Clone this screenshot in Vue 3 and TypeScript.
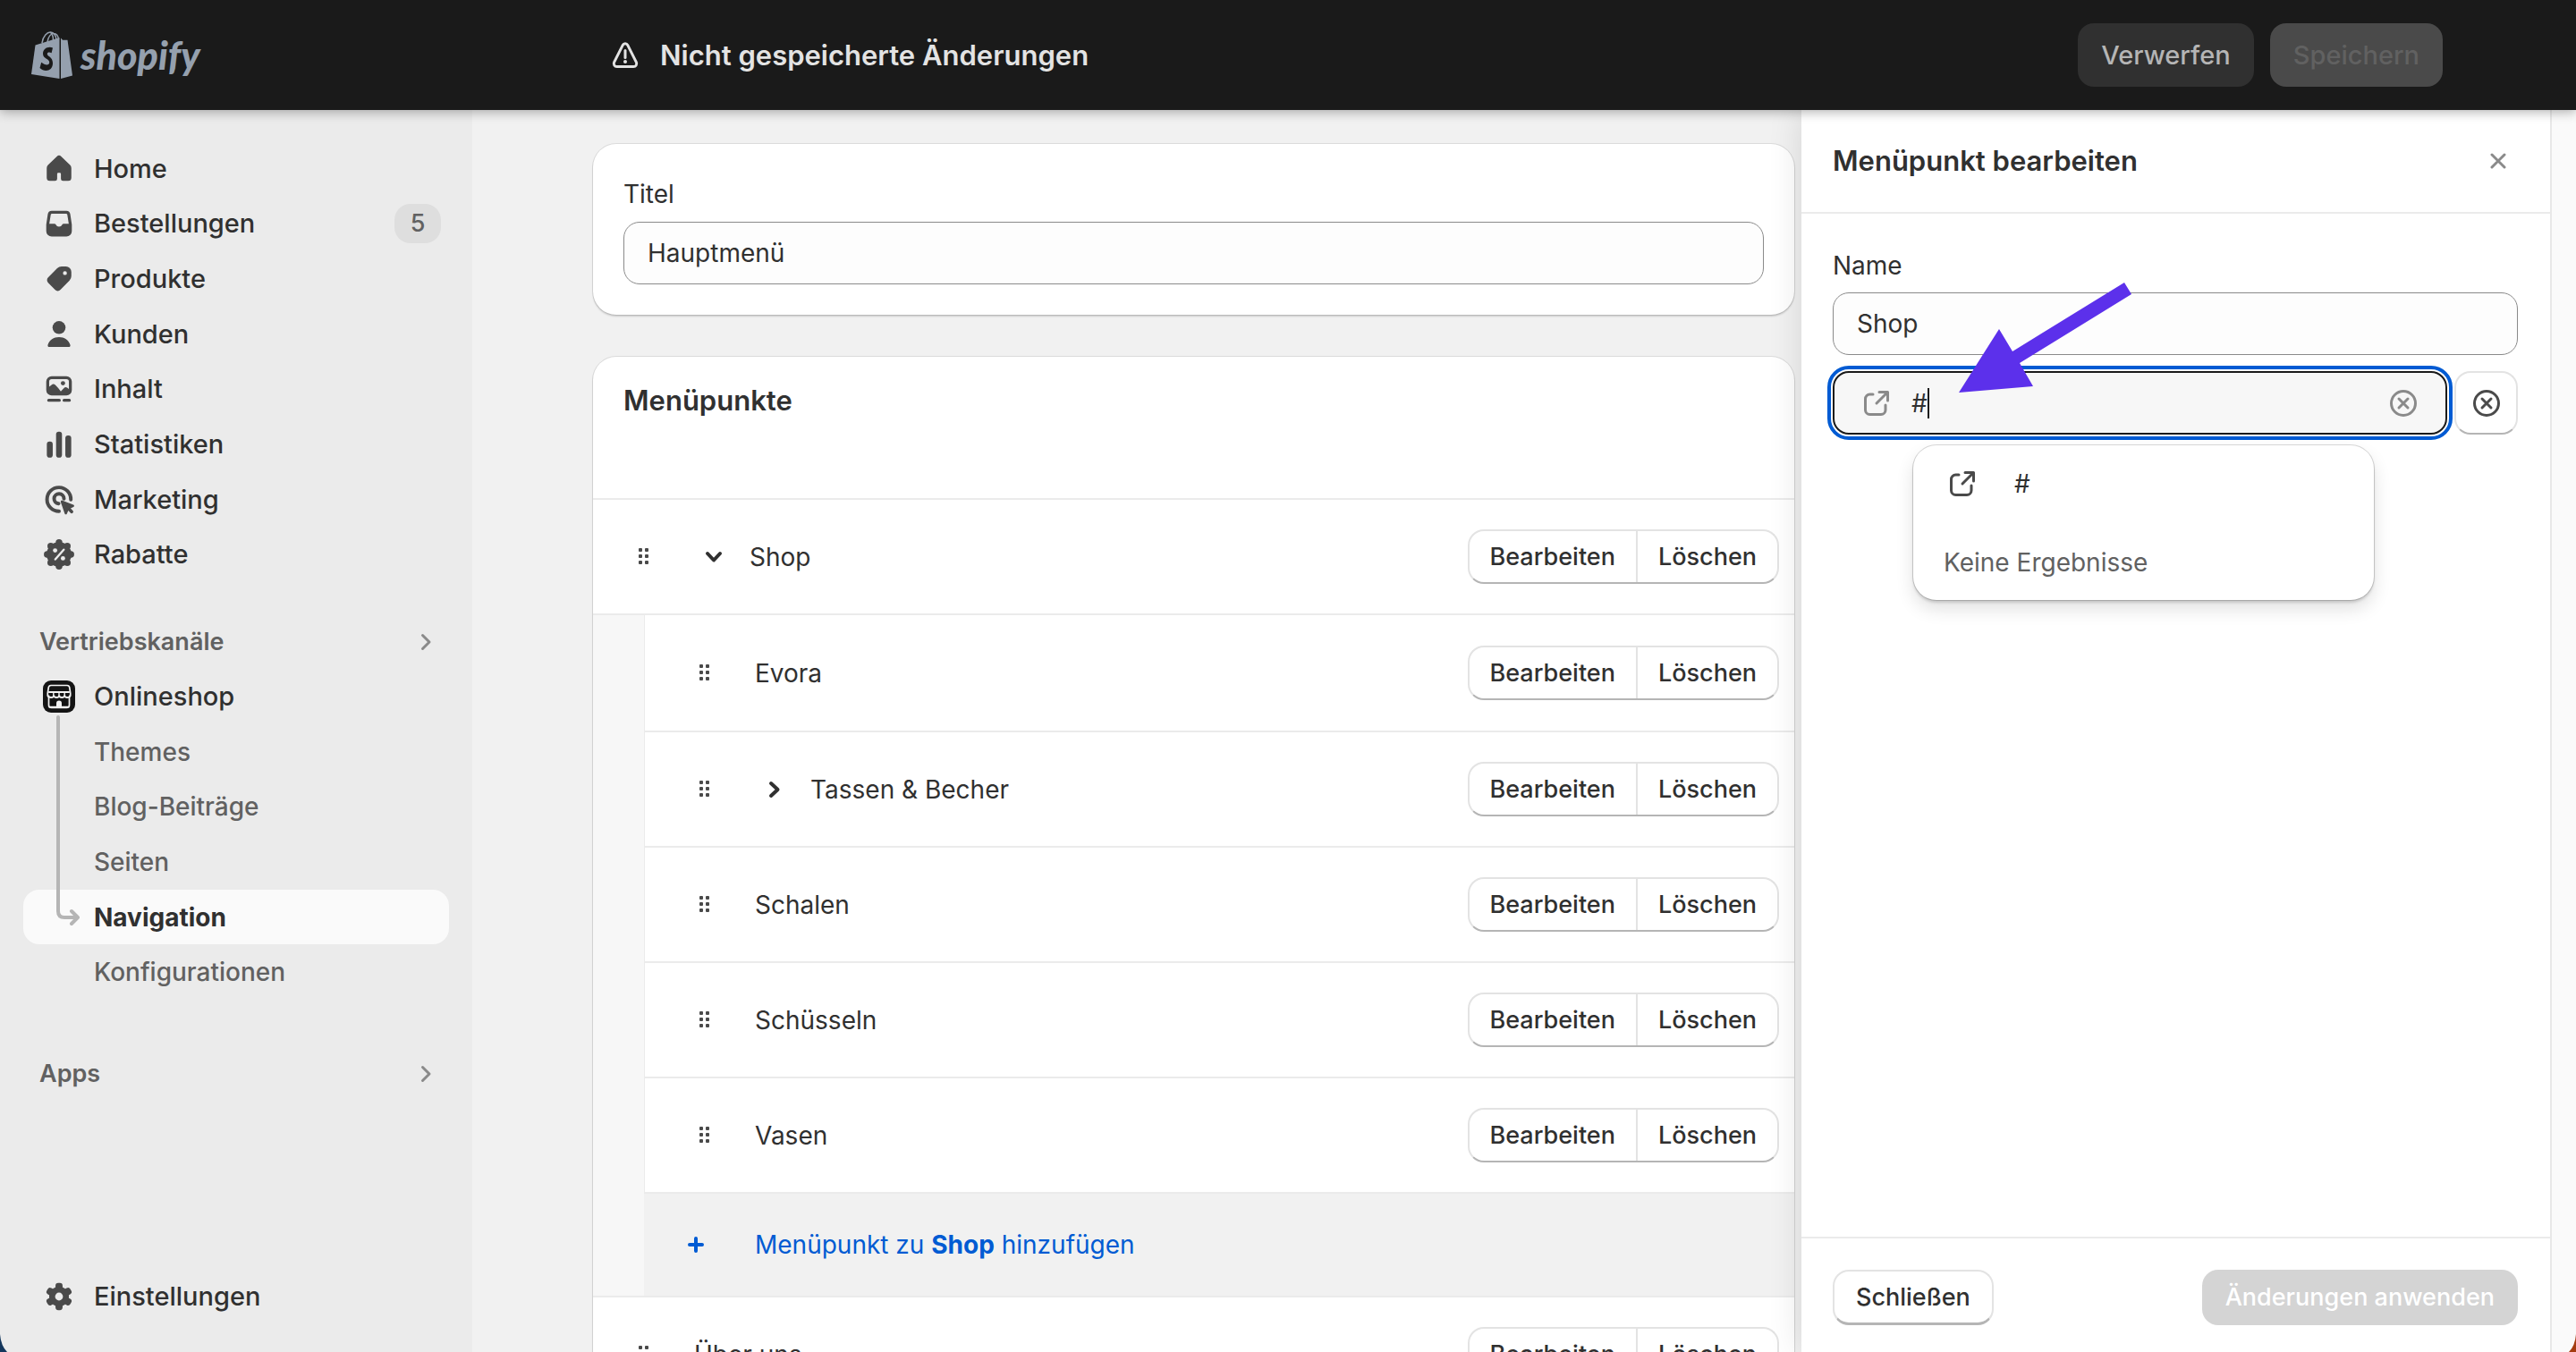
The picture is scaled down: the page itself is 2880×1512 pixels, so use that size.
<script setup lang="ts">
import { ref } from 'vue'

interface NavItem {
  label: string
  icon: string
  badge?: string
}

interface MenuEntry {
  label: string
  expandable?: boolean
}

const icons: Record<string, string> = {
  home: '<path d="M8.9 3.6a1.6 1.6 0 0 1 2.2 0l4.5 4.4a2.2 2.2 0 0 1 .65 1.55v4.9a1.6 1.6 0 0 1-1.6 1.6h-2.6a1.1 1.1 0 0 1-1.1-1.1v-2.4a.6.6 0 0 0-.6-.6h-.7a.6.6 0 0 0-.6.6v2.4a1.1 1.1 0 0 1-1.1 1.1h-2.6a1.6 1.6 0 0 1-1.6-1.6v-4.9a2.2 2.2 0 0 1 .65-1.55z"/>',
  orders:
    '<path fill-rule="evenodd" d="M6.3 3.5h7.4a2 2 0 0 1 2 1.75l.7 4.6q.1.5.1 1v3a2.75 2.75 0 0 1-2.75 2.75h-7.5a2.75 2.75 0 0 1-2.75-2.75v-3q0-.5.1-1l.7-4.6a2 2 0 0 1 2-1.75zM6.4 5a.6.6 0 0 0-.6.5l-.75 4.6h2.6a.8.8 0 0 1 .75.5 1.75 1.75 0 0 0 3.2 0 .8.8 0 0 1 .75-.5h2.6l-.75-4.6a.6.6 0 0 0-.6-.5z"/>',
  products:
    '<path fill-rule="evenodd" d="M11.4 3.6h2.1a2.75 2.75 0 0 1 2.75 2.75v2.2a3.2 3.2 0 0 1-.93 2.25l-4.6 4.7a1.9 1.9 0 0 1-2.75 0l-3.5-3.6a1.9 1.9 0 0 1 0-2.7l4.6-4.65a3.2 3.2 0 0 1 2.33-.95zM13 6a1 1 0 1 0 0 2 1 1 0 0 0 0-2z"/>',
  customers:
    '<circle cx="10" cy="6.5" r="3.3"/><path d="M4.3 15.3c.8-2.4 3-3.9 5.7-3.9s4.9 1.5 5.7 3.9c.15.6-.2 1.1-.75 1.1H5.05c-.55 0-.9-.5-.75-1.1z"/>',
  content:
    '<path fill-rule="evenodd" d="M6.25 3.5h7.5a2.75 2.75 0 0 1 2.75 2.75v4.3a2.75 2.75 0 0 1-2.75 2.75h-7.5a2.75 2.75 0 0 1-2.75-2.75v-4.3a2.75 2.75 0 0 1 2.75-2.75zM6.25 5A1.25 1.25 0 0 0 5 6.25V8.9l1.2-1a1.4 1.4 0 0 1 1.9.1l1.5 1.6 1.3 1.6 1.6-1.7a1.3 1.3 0 0 1 1.6-.15l.9.6V6.25A1.25 1.25 0 0 0 13.75 5z"/><circle cx="12" cy="7.1" r="1.1"/><rect x="4" y="15" width="6.9" height="1.5" rx=".75"/><rect x="11.8" y="15" width="4.2" height="1.5" rx=".75"/>',
  analytics:
    '<rect x="3.8" y="8.5" width="3" height="8.2" rx="1.4"/><rect x="8.5" y="3.5" width="3" height="13.2" rx="1.4"/><rect x="13.2" y="5.4" width="3" height="11.3" rx="1.4"/>',
  marketing:
    '<g fill="none" stroke="currentColor" stroke-width="1.8" stroke-linecap="round"><path d="M16 9.9a6.05 6.05 0 1 0-6 5.9"/><path d="M12.5 9.4a2.5 2.5 0 1 0-2.7 2.5"/></g><path d="M11.7 10.3l5.6 2.2c.6.2.5.9 0 1.1l-1.4.7 1.1 1.1a.8.8 0 0 1-1.2 1.2l-1.1-1.1-.7 1.5c-.2.6-.9.5-1.1 0l-2-5.8c-.2-.6.3-1.1.8-.9z"/>',
  discounts:
    '<circle cx="10" cy="10" r="6.3"/><circle cx="10" cy="4" r="1.7"/><circle cx="10" cy="16" r="1.7"/><circle cx="4" cy="10" r="1.7"/><circle cx="16" cy="10" r="1.7"/><circle cx="5.8" cy="5.8" r="1.7"/><circle cx="14.2" cy="5.8" r="1.7"/><circle cx="5.8" cy="14.2" r="1.7"/><circle cx="14.2" cy="14.2" r="1.7"/><g fill="#ebebeb"><circle cx="8" cy="8" r="1.1"/><circle cx="12" cy="12" r="1.1"/></g><path d="M8.1 12.5l4.3-4.9" stroke="#ebebeb" stroke-width="1.1" stroke-linecap="round"/>',
  settings:
    '<g><rect x="8.2" y="3.1" width="3.6" height="13.8" rx="1.4"/><rect x="8.2" y="3.1" width="3.6" height="13.8" rx="1.4" transform="rotate(60 10 10)"/><rect x="8.2" y="3.1" width="3.6" height="13.8" rx="1.4" transform="rotate(120 10 10)"/><circle cx="10" cy="10" r="5"/></g><circle cx="10" cy="10" r="2" fill="#ebebeb"/>',
}

const navItems: NavItem[] = [
  { label: 'Home', icon: 'home' },
  { label: 'Bestellungen', icon: 'orders', badge: '5' },
  { label: 'Produkte', icon: 'products' },
  { label: 'Kunden', icon: 'customers' },
  { label: 'Inhalt', icon: 'content' },
  { label: 'Statistiken', icon: 'analytics' },
  { label: 'Marketing', icon: 'marketing' },
  { label: 'Rabatte', icon: 'discounts' },
]

const shopPages: string[] = ['Themes', 'Blog-Beiträge', 'Seiten', 'Navigation', 'Konfigurationen']
const activePage = ref('Navigation')

const children: MenuEntry[] = [
  { label: 'Evora' },
  { label: 'Tassen & Becher', expandable: true },
  { label: 'Schalen' },
  { label: 'Schüsseln' },
  { label: 'Vasen' },
]

const menuTitle = ref('Hauptmenü')
const itemName = ref('Shop')
const itemLink = ref('#')
</script>

<template>
  <div class="app">
    <header class="topbar">
      <a class="brand" href="#" aria-label="shopify">
        <svg class="bag" viewBox="0 0 46 54" aria-hidden="true">
          <path d="M4.5 15.5L31.5 7v46L0 48z" fill="#95a0ae" />
          <path d="M33 7.5l2 2.2h5.5L46 49.5 33 53z" fill="#95a0ae" />
          <path d="M12 13C13 5 18 .8 21.5 1c4 .2 6 4 6.5 9M18 12c1-6 4-9.5 7-9.5 3.5 0 5 3 5.5 6.5M24.5 10c0-4-1-7-3-8.5" fill="none" stroke="#95a0ae" stroke-width="1.5" />
          <path d="M24 18.5c-5-2.2-11 .8-11 6.5 0 6 7.2 5.5 7.2 9.7 0 3.8-5 3.3-9 .1l-1.7 6.2c5 5 14.5 4 14.5-5.5 0-7-6.2-7.5-6.2-10 0-2.2 2.5-2.3 4.8-1.3z" fill="#1a1a1a" />
        </svg>
        <span class="wordmark">shopify</span>
      </a>
      <div class="savebar">
        <svg class="warn" viewBox="0 0 30 30" aria-hidden="true">
          <path d="M12.3 3.4L2.6 22.6a3.5 3.5 0 0 0 3.1 5h18.6a3.5 3.5 0 0 0 3.1-5L17.7 3.4a3 3 0 0 0-5.4 0z" fill="none" stroke="currentColor" stroke-width="3" />
          <path d="M15 9.5v8" stroke="currentColor" stroke-width="3" stroke-linecap="round" />
          <circle cx="15" cy="22" r="2" fill="currentColor" />
        </svg>
        <h1>Nicht gespeicherte Änderungen</h1>
        <button class="bar-btn" type="button">Verwerfen</button>
        <button class="bar-btn save" type="button" disabled>Speichern</button>
      </div>
    </header>

    <div class="body">
      <aside class="sidebar">
        <nav class="nav primary">
          <a v-for="item in navItems" :key="item.label" class="nav-item" href="#">
            <svg class="nav-icon" viewBox="0 0 20 20" fill="currentColor" aria-hidden="true" v-html="icons[item.icon]"></svg>
            <span>{{ item.label }}</span>
            <span v-if="item.badge" class="badge">{{ item.badge }}</span>
          </a>
        </nav>
        <nav class="nav channels">
          <a class="nav-item section" href="#">
            <span>Vertriebskanäle</span>
            <svg class="section-chevron" viewBox="0 0 20 20" aria-hidden="true"><path d="M6.5 2.5L14 10l-7.5 7.5" /></svg>
          </a>
          <a class="nav-item" href="#">
            <svg class="nav-icon" viewBox="0 0 44 44" aria-hidden="true">
              <rect x="4" y="4" width="36" height="36" rx="9" fill="#141414" />
              <path d="M13 9.5h18q2.3 0 2.7 2.2l1 6.3v3l-1.2 2v8.5q0 3-3 3h-17q-3 0-3-3V23l-1.2-2v-3l1-6.3q.4-2.2 2.7-2.2z" fill="none" stroke="#f4f4f4" stroke-width="1.7" />
              <path d="M10.2 17h23.6M10.2 20.5q0 2.5 3 2.5t3-2.5q0 2.5 3 2.5t3-2.5q0 2.5 3 2.5t3-2.5q0 2.5 3 2.5t2.6-2.5" fill="none" stroke="#f4f4f4" stroke-width="1.8" />
              <path d="M15.8 17v4M22 17v4M28.2 17v4" stroke="#f4f4f4" stroke-width="1.4" />
              <path d="M19 34.5v-5q0-3 3-3t3 3v5z" fill="#f4f4f4" />
              <path d="M12 33.5h20" stroke="#f4f4f4" stroke-width="1.5" />
            </svg>
            <span>Onlineshop</span>
          </a>
          <a
            v-for="page in shopPages"
            :key="page"
            class="nav-item sub"
            :class="{ active: page === activePage }"
            href="#"
            @click.prevent="activePage = page"
          >
            <span>{{ page }}</span>
          </a>
          <svg class="branch" viewBox="0 0 28 236" aria-hidden="true">
            <path d="M3 2v217q0 7 7 7h14M18 219l7 7-7 7" />
          </svg>
        </nav>
        <nav class="nav apps">
          <a class="nav-item section" href="#">
            <span>Apps</span>
            <svg class="section-chevron" viewBox="0 0 20 20" aria-hidden="true"><path d="M6.5 2.5L14 10l-7.5 7.5" /></svg>
          </a>
        </nav>
        <nav class="nav settings">
          <a class="nav-item" href="#">
            <svg class="nav-icon" viewBox="0 0 20 20" fill="currentColor" aria-hidden="true" v-html="icons.settings"></svg>
            <span>Einstellungen</span>
          </a>
        </nav>
      </aside>

      <main class="main">
        <section class="card title-card">
          <label class="label" for="menu-title">Titel</label>
          <input id="menu-title" v-model="menuTitle" class="input" type="text" />
        </section>

        <section class="card list-card">
          <h2>Menüpunkte</h2>
          <div class="row">
            <svg class="handle" viewBox="0 0 12 20" aria-hidden="true">
              <g fill="currentColor">
                <rect v-for="n in 6" :key="n" :x="n % 2 ? 0 : 7" :y="Math.floor((n - 1) / 2) * 7" width="4" height="4" rx="1" />
              </g>
            </svg>
            <svg class="toggle" viewBox="0 0 22 22" aria-hidden="true"><path d="M4 7l7 7.5L18 7" /></svg>
            <span class="row-label">Shop</span>
            <div class="actions">
              <button type="button">Bearbeiten</button>
              <button type="button">Löschen</button>
            </div>
          </div>
          <div class="nested">
            <div class="nested-rows">
              <div v-for="child in children" :key="child.label" class="row child">
                <svg class="handle" viewBox="0 0 12 20" aria-hidden="true">
                  <g fill="currentColor">
                    <rect v-for="n in 6" :key="n" :x="n % 2 ? 0 : 7" :y="Math.floor((n - 1) / 2) * 7" width="4" height="4" rx="1" />
                  </g>
                </svg>
                <svg v-if="child.expandable" class="toggle" viewBox="0 0 22 22" aria-hidden="true"><path d="M7 4l7.5 7L7 18" /></svg>
                <span class="row-label">{{ child.label }}</span>
                <div class="actions">
                  <button type="button">Bearbeiten</button>
                  <button type="button">Löschen</button>
                </div>
              </div>
            </div>
            <a class="add" href="#">
              <svg class="plus" viewBox="0 0 18 18" aria-hidden="true"><path d="M9 2v14M2 9h14" /></svg>
              <span>Menüpunkt zu <b>Shop</b> hinzufügen</span>
            </a>
          </div>
          <div class="row">
            <svg class="handle" viewBox="0 0 12 20" aria-hidden="true">
              <g fill="currentColor">
                <rect v-for="n in 6" :key="n" :x="n % 2 ? 0 : 7" :y="Math.floor((n - 1) / 2) * 7" width="4" height="4" rx="1" />
              </g>
            </svg>
            <span class="row-label last">Über uns</span>
            <div class="actions">
              <button type="button">Bearbeiten</button>
              <button type="button">Löschen</button>
            </div>
          </div>
        </section>
      </main>

      <section class="panel" aria-label="Menüpunkt bearbeiten">
        <header class="panel-head">
          <h2>Menüpunkt bearbeiten</h2>
          <button class="close" type="button" aria-label="Schließen">
            <svg viewBox="0 0 22 22" aria-hidden="true"><path d="M4 4l14 14M18 4L4 18" /></svg>
          </button>
        </header>
        <div class="panel-body">
          <label class="label" for="item-name">Name</label>
          <input id="item-name" v-model="itemName" class="input" type="text" />
          <div class="link-row">
            <div class="link-field">
              <svg class="ext muted" viewBox="0 0 30 30" aria-hidden="true">
                <path d="M11 5H7.5A5 5 0 0 0 2.5 10v12.5a5 5 0 0 0 5 5H20a5 5 0 0 0 5-5V17M18 2.5h9.5V12M27 3L15 15" />
              </svg>
              <input v-model="itemLink" class="link-input" type="text" aria-label="Link" />
              <span class="caret" aria-hidden="true"></span>
              <button class="clear" type="button" aria-label="Leeren">
                <svg viewBox="0 0 32 32" aria-hidden="true"><circle cx="16" cy="16" r="13.5" /><path d="M11 11l10 10M21 11L11 21" /></svg>
              </button>
            </div>
            <button class="remove" type="button" aria-label="Link entfernen">
              <svg viewBox="0 0 32 32" aria-hidden="true"><circle cx="16" cy="16" r="13.5" /><path d="M11 11l10 10M21 11L11 21" /></svg>
            </button>
            <div class="popover">
              <a class="option" href="#">
                <svg class="ext" viewBox="0 0 30 30" aria-hidden="true">
                  <path d="M11 5H7.5A5 5 0 0 0 2.5 10v12.5a5 5 0 0 0 5 5H20a5 5 0 0 0 5-5V17M18 2.5h9.5V12M27 3L15 15" />
                </svg>
                <span>#</span>
              </a>
              <p>Keine Ergebnisse</p>
            </div>
            <svg class="pointer" viewBox="0 0 194 124" aria-hidden="true">
              <path d="M0 123L45 52l15 25L185 0l8 13L68 90l15 26z" />
            </svg>
          </div>
        </div>
        <footer class="panel-foot">
          <button class="btn" type="button">Schließen</button>
          <button class="btn apply" type="button" disabled>Änderungen anwenden</button>
        </footer>
      </section>
      <div class="gutter"></div>
    </div>
    <svg class="corner left" viewBox="0 0 8 20" aria-hidden="true"><path d="M0 0q1 13 8 20H0z" fill="#14365c" /></svg>
    <svg class="corner right" viewBox="0 0 8 20" aria-hidden="true"><path d="M8 0Q7 13 0 20h8z" fill="#a43c10" /></svg>
  </div>
</template>

<style>
html,
body {
  background: #f1f1f1;
}
</style>

<style scoped>
.app,
.app * {
  box-sizing: border-box;
}
.app {
  position: relative;
  display: flex;
  flex-direction: column;
  height: 100vh;
  overflow: hidden;
  font-family: Inter, 'Liberation Sans', sans-serif;
  font-size: 28px;
  line-height: 44px;
  color: #303030;
}
button,
input {
  font: inherit;
  color: inherit;
  margin: 0;
}
button {
  border: 0;
  background: none;
}
a {
  color: inherit;
  text-decoration: none;
}
h1,
h2,
p {
  margin: 0;
}
h1,
h2 {
  font-size: 31px;
  font-weight: 600;
}

/* Top bar */
.topbar {
  position: relative;
  z-index: 3;
  flex: 0 0 123px;
  display: flex;
  align-items: center;
  background: #1a1a1a;
  box-shadow: 0 2px 12px rgba(0, 0, 0, 0.32);
}
.brand {
  flex: 0 0 684px;
  display: flex;
  align-items: center;
  gap: 9px;
  padding-left: 35px;
  color: #95a0ae;
}
.bag {
  width: 46px;
  height: 54px;
}
.wordmark {
  font-family: Lato, 'Open Sans', sans-serif;
  font-size: 43px;
  font-weight: 900;
  font-style: italic;
}
.savebar {
  flex: 1;
  display: flex;
  align-items: center;
  gap: 18px;
  padding-right: 149px;
  color: #e3e3e3;
}
.warn {
  width: 30px;
  height: 30px;
}
.savebar h1 {
  flex: 1;
  padding-left: 6px;
}
.bar-btn {
  height: 71px;
  padding: 0 26px;
  border-radius: 18px;
  background: #303030;
  color: #b5b5b5;
  font-size: 29px;
  font-weight: 500;
}
.bar-btn.save {
  background: #4a4a4a;
  color: #616161;
  font-weight: 550;
}

/* Sidebar */
.body {
  flex: 1;
  min-height: 0;
  display: flex;
}
.sidebar {
  flex: 0 0 528px;
  display: flex;
  flex-direction: column;
  padding: 35px 26px 31px;
  background: #ebebeb;
}
.nav {
  position: relative;
  display: grid;
  grid-auto-rows: 1fr;
}
.primary {
  min-height: 493px;
}
.channels {
  min-height: 431px;
  margin-top: 36px;
}
.apps {
  min-height: 62px;
  margin-top: 52px;
}
.settings {
  min-height: 62px;
  margin-top: auto;
}
.nav-item {
  display: flex;
  align-items: center;
  gap: 17px;
  padding: 0 9px 0 18px;
  border-radius: 18px;
  font-size: 29px;
  font-weight: 550;
}
.nav-icon {
  flex: none;
  width: 44px;
  height: 44px;
  color: #4a4a4a;
}
.badge {
  width: 52px;
  margin-left: auto;
  border-radius: 18px;
  background: #dedede;
  color: #616161;
  font-size: 27px;
  text-align: center;
}
.section {
  justify-content: space-between;
  padding-right: 16px;
  color: #616161;
  font-size: 27px;
  font-weight: 600;
}
.section-chevron {
  width: 20px;
  height: 20px;
  fill: none;
  stroke: #8a8a8a;
  stroke-width: 3;
  stroke-linecap: round;
  stroke-linejoin: round;
}
.sub {
  padding-left: 79px;
  color: #616161;
  font-size: 28px;
  font-weight: 450;
}
.sub.active {
  background: #fafafa;
  color: #303030;
  font-weight: 650;
}
.branch {
  position: absolute;
  left: 36px;
  top: 113px;
  width: 28px;
  height: 236px;
  fill: none;
  stroke: #b5b5b5;
  stroke-width: 4;
  stroke-linecap: round;
  stroke-linejoin: round;
}

/* Main column */
.main {
  flex: 1;
  min-width: 0;
  display: flex;
  flex-direction: column;
  gap: 47px;
  padding: 38px 8px 0 135px;
}
.card {
  flex: none;
  border-radius: 26px;
  background: #fff;
  box-shadow:
    0 0 0 1px rgba(0, 0, 0, 0.09),
    0 2px 2px rgba(0, 0, 0, 0.16);
}
.title-card {
  display: flex;
  flex-direction: column;
  gap: 9px;
  padding: 34px;
}
.input {
  width: 100%;
  height: 70px;
  padding: 0 26px;
  border: 1px solid #8a8a8a;
  border-radius: 18px;
  background: #fdfdfd;
}
.list-card h2 {
  height: 158px;
  padding: 27px 34px;
}
.row {
  min-height: 129px;
  display: flex;
  align-items: center;
  padding: 0 17px 0 51px;
  border-top: 2px solid #ebebeb;
}
.handle {
  flex: none;
  width: 12px;
  height: 20px;
  color: #4a4a4a;
}
.toggle {
  flex: none;
  width: 22px;
  height: 22px;
  margin: 0 29px 0 61px;
  fill: none;
  stroke: #303030;
  stroke-width: 4;
  stroke-linecap: round;
  stroke-linejoin: round;
}
.row-label {
  flex: 1;
}
.row-label.last {
  padding-left: 50px;
}
.actions {
  display: flex;
  height: 61px;
  border: 2px solid #e3e3e3;
  border-bottom-color: #b5b5b5;
  border-radius: 18px;
}
.actions button {
  padding: 0 23px;
  font-size: 27px;
  font-weight: 500;
}
.actions button + button {
  border-left: 2px solid #e3e3e3;
}
.nested {
  padding-left: 57px;
  border-top: 2px solid #ebebeb;
  background: linear-gradient(90deg, #f7f7f7 57px, #fff 57px);
}
.nested-rows {
  display: grid;
  grid-auto-rows: 1fr;
  min-height: 645px;
  border-left: 1px solid #ebebeb;
}
.child {
  padding-left: 61px;
}
.child:first-child {
  border-top: 0;
}
.child .handle + .row-label {
  padding-left: 50px;
}
.add {
  display: flex;
  align-items: center;
  gap: 57px;
  min-height: 116px;
  padding-left: 49px;
  border-top: 2px solid #ebebeb;
  background: #f1f1f1;
  color: #005bd3;
}
.add b {
  font-weight: 700;
}
.plus {
  width: 18px;
  height: 18px;
  stroke: #005bd3;
  stroke-width: 4;
  stroke-linecap: round;
}

/* Edit panel */
.panel {
  position: relative;
  z-index: 2;
  flex: 0 0 837px;
  display: flex;
  flex-direction: column;
  background: #fff;
  box-shadow: 0 0 36px rgba(0, 0, 0, 0.12);
}
.panel-head {
  display: flex;
  align-items: center;
  justify-content: space-between;
  height: 116px;
  padding: 0 47px 0 35px;
  border-bottom: 2px solid #ebebeb;
}
.close {
  padding: 0;
  line-height: 0;
}
.close svg {
  width: 22px;
  height: 22px;
  stroke: #8a8a8a;
  stroke-width: 3;
  stroke-linecap: round;
}
.panel-body {
  flex: 1;
  display: flex;
  flex-direction: column;
  padding: 36px 36px 0 35px;
}
.panel-body .label {
  margin-bottom: 8px;
}
.link-row {
  position: relative;
  display: flex;
  gap: 8px;
  margin-top: 18px;
}
.link-field {
  flex: 1;
  display: flex;
  align-items: center;
  height: 71px;
  padding: 0 31px 0 32px;
  border: 2px solid #1a1a1a;
  border-radius: 18px;
  outline: 4px solid #005bd3;
  outline-offset: 2px;
  background: #f7f7f7;
}
.ext {
  flex: none;
  width: 30px;
  height: 30px;
  fill: none;
  stroke: #4a4a4a;
  stroke-width: 3;
  stroke-linecap: round;
  stroke-linejoin: round;
}
.ext.muted {
  stroke: #8a8a8a;
}
.link-input {
  width: 18px;
  margin-left: 24px;
  padding: 0;
  border: 0;
  outline: 0;
  background: none;
}
.caret {
  width: 2px;
  height: 34px;
  background: #1a1a1a;
}
.clear {
  margin-left: auto;
  padding: 0;
  line-height: 0;
}
.clear svg,
.remove svg {
  width: 32px;
  height: 32px;
  fill: none;
  stroke: #8a8a8a;
  stroke-width: 3;
  stroke-linecap: round;
}
.remove {
  width: 71px;
  height: 71px;
  padding: 0;
  line-height: 0;
  border: 2px solid #e3e3e3;
  border-bottom-color: #b5b5b5;
  border-radius: 18px;
}
.remove svg {
  stroke: #4a4a4a;
}
.popover {
  position: absolute;
  left: 90px;
  top: 83px;
  width: 515px;
  padding: 21px 34px 20px;
  border-radius: 26px;
  background: #fff;
  box-shadow:
    0 0 0 1px rgba(0, 0, 0, 0.15),
    0 3px 3px rgba(0, 0, 0, 0.14),
    0 10px 20px rgba(0, 0, 0, 0.12);
}
.option {
  display: flex;
  align-items: center;
  gap: 43px;
  padding-left: 6px;
}
.popover p {
  margin-top: 44px;
  color: #616161;
}
.pointer {
  position: absolute;
  left: 141px;
  top: -99px;
  width: 194px;
  height: 124px;
  fill: #5c30eb;
  pointer-events: none;
}
.panel-foot {
  display: flex;
  justify-content: space-between;
  height: 129px;
  padding: 35px 36px 30px 35px;
  border-top: 2px solid #ebebeb;
}
.btn {
  height: 62px;
  padding: 0 24px;
  border: 2px solid #e3e3e3;
  border-bottom: 3px solid #b5b5b5;
  border-radius: 18px;
  font-size: 27px;
  font-weight: 550;
}
.btn.apply {
  border-color: #d4d4d4;
  background: #d4d4d4;
  color: #fff;
}
.gutter {
  position: relative;
  z-index: 2;
  flex: 0 0 29px;
  border-left: 2px solid #e8e8e8;
  background: #fafafa;
}
.corner {
  position: absolute;
  z-index: 4;
  bottom: 0;
  width: 8px;
  height: 20px;
}
.left {
  left: 0;
}
.right {
  right: 0;
}
</style>
